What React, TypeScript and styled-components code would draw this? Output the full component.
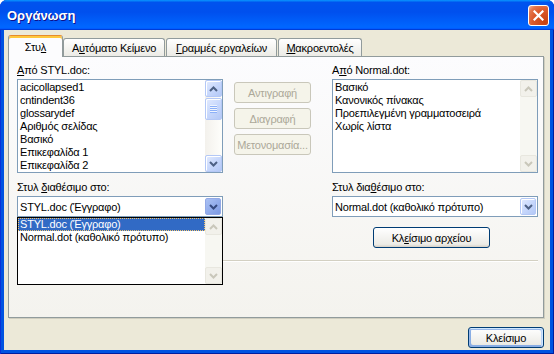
import React from 'react';
import styled, { createGlobalStyle, css } from 'styled-components';

const GlobalStyle = createGlobalStyle`
  html, body {
    margin: 0;
    padding: 0;
    background: #ffffff;
  }
  body {
    font-family: 'Liberation Sans', Arial, sans-serif;
    font-size: 11px;
    letter-spacing: -0.2px;
    color: #000;
  }
`;

const Window = styled.div`
  width: 554px;
  height: 354px;
  box-sizing: border-box;
  display: flex;
  flex-direction: column;
  background: #0053e1;
  border-radius: 7px 7px 0 0;
  overflow: hidden;
  box-shadow: inset 1px 0 #0831d9, inset -1px 0 #001ea0, inset 0 -1px #001ea0;
`;

const TitleBar = styled.div`
  height: 30px;
  flex-shrink: 0;
  display: flex;
  align-items: center;
  padding: 1px 5px 0 7px;
  box-sizing: border-box;
  background: linear-gradient(
    180deg,
    #0997ff 0%,
    #0053ee 8%,
    #0050ee 40%,
    #0066ff 88%,
    #0066ff 93%,
    #005bff 95%,
    #003dd7 96%,
    #003dd7 100%
  );
`;

const Title = styled.div`
  flex: 1;
  color: #fff;
  font-weight: bold;
  font-size: 13px;
  letter-spacing: 0;
  text-shadow: 1px 1px #0f1089;
`;

const CloseBox = styled.div`
  width: 21px;
  height: 21px;
  box-sizing: border-box;
  border: 1px solid #fff;
  border-radius: 3px;
  margin-top: -1px;
  display: flex;
  align-items: center;
  justify-content: center;
  background: radial-gradient(circle at 85% 85%, #c74111 0%, #dc5a2c 55%, #e4764c 80%, #f3b79c 100%);
`;

const Client = styled.div`
  flex: 1;
  margin: 0 4px 4px;
  background: #ece9d8;
  display: flex;
  flex-direction: column;
  padding: 5px 6px 0 4px;
  box-sizing: border-box;
`;

const TabRow = styled.div`
  height: 21px;
  display: flex;
  align-items: flex-end;
  gap: 1px;
  position: relative;
  z-index: 2;
`;

const Tab = styled.div<{ $active?: boolean; $w: number }>`
  width: ${p => p.$w}px;
  height: 18px;
  box-sizing: border-box;
  padding-top: 3px;
  display: flex;
  justify-content: center;
  line-height: 13px;
  white-space: nowrap;
  border: 1px solid #919b9c;
  border-bottom: none;
  border-radius: 3px 3px 0 0;
  background: linear-gradient(180deg, #ffffff 0%, #f3f3ef 60%, #ecebe6 100%);
  ${p =>
    p.$active &&
    css`
      height: 22px;
      margin-bottom: -1px;
      margin-right: -1px;
      padding-top: 5px;
      background: #fcfcfe;
      border-top-color: #e68b2c;
      box-shadow: inset 0 2px #ffc83c;
    `}
`;

const Panel = styled.div`
  height: 262px;
  box-sizing: border-box;
  border: 1px solid #919b9c;
  background: linear-gradient(180deg, #fcfcfe 0%, #f4f3ee 100%);
  box-shadow: 1px 1px 0 #d0cebf;
  padding: 7px 5px 0 8px;
  position: relative;
  z-index: 1;
`;

const Columns = styled.div`
  display: grid;
  grid-template-columns: 206px 109px 206px;
  align-items: start;
`;

const Column = styled.div`
  display: flex;
  flex-direction: column;
`;

const ButtonColumn = styled.div`
  display: flex;
  flex-direction: column;
  gap: 5px;
  padding: 18px 0 0 11px;
`;

const Label = styled.div<{ $lower?: boolean }>`
  height: 13px;
  line-height: 13px;
  margin-bottom: 2px;
  white-space: nowrap;
  ${p => p.$lower && 'margin-top: 8px;'}
`;

const Key = styled.span`
  text-decoration: underline;
  text-underline-offset: 1px;
`;

const ListBox = styled.div`
  height: 94px;
  box-sizing: border-box;
  border: 1px solid #7f9db9;
  background: #fff;
  display: flex;
`;

const Items = styled.div`
  flex: 1;
  min-width: 0;
  padding-top: 1px;
`;

const Item = styled.div<{ $selected?: boolean }>`
  height: 13px;
  line-height: 13px;
  padding-left: 2px;
  white-space: nowrap;
  overflow: hidden;
  ${p =>
    p.$selected &&
    css`
      background: #316ac5;
      color: #fff;
      outline: 1px dotted #f2c46e;
      outline-offset: -1px;
    `}
`;

const ScrollTrack = styled.div<{ $disabled?: boolean }>`
  width: 17px;
  display: flex;
  flex-direction: column;
  background: ${p => (p.$disabled ? '#f7f7f2' : 'linear-gradient(90deg, #f3f1ec, #fefefb)')};
`;

const blueFace = css`
  border: 1px solid #b4c8f6;
  border-radius: 2px;
  background: linear-gradient(135deg, #e3ebfe 0%, #c8d8fc 50%, #b3c8f6 100%);
  box-shadow: inset 1px 1px #fff;
`;

const ScrollButton = styled.div<{ $disabled?: boolean }>`
  width: 17px;
  height: 17px;
  box-sizing: border-box;
  display: flex;
  align-items: center;
  justify-content: center;
  ${p =>
    p.$disabled
      ? css`
          border: 1px solid #e8e7df;
          border-radius: 2px;
          background: #f2f1eb;
          color: #c9c7ba;
        `
      : css`
          ${blueFace};
          color: #4d6185;
        `}
`;

const Thumb = styled.div`
  ${blueFace};
  height: 22px;
  margin-top: 1px;
  box-sizing: border-box;
  display: flex;
  align-items: center;
  justify-content: center;
`;

const Grip = styled.div`
  width: 7px;
  height: 8px;
  background: repeating-linear-gradient(180deg, #eef4fe 0px, #eef4fe 1px, #8cb0f8 1px, #8cb0f8 2px);
`;

const Filler = styled.div`
  flex: 1;
`;

const Combo = styled.div`
  position: relative;
  height: 21px;
  box-sizing: border-box;
  border: 1px solid #7f9db9;
  background: #fff;
  display: flex;
  align-items: center;
`;

const ComboText = styled.div`
  flex: 1;
  padding-left: 2px;
  white-space: nowrap;
  overflow: hidden;
`;

const ComboArrow = styled.div<{ $open?: boolean }>`
  width: 16px;
  height: 17px;
  margin-right: 1px;
  box-sizing: border-box;
  display: flex;
  align-items: center;
  justify-content: center;
  border-radius: 2px;
  color: #4d6185;
  ${p =>
    p.$open
      ? css`
          border: 1px solid #93a9e6;
          background: linear-gradient(135deg, #aac1f3 0%, #8ea9ea 60%, #7d9ae3 100%);
          color: #354a80;
        `
      : css`
          border: 1px solid #b4c8f6;
          background: linear-gradient(135deg, #e3ebfe 0%, #c8d8fc 50%, #b3c8f6 100%);
          box-shadow: inset 1px 1px #fff;
        `}
`;

const DropList = styled.div`
  position: absolute;
  top: calc(100% + 1px);
  left: -1px;
  width: 206px;
  height: 68px;
  box-sizing: border-box;
  border: 1px solid #000;
  background: #fff;
  display: flex;
  z-index: 5;
`;

const DropItems = styled.div`
  flex: 1;
  min-width: 0;
`;

const Button = styled.button<{ $w: number; $default?: boolean }>`
  width: ${p => p.$w}px;
  height: 21px;
  box-sizing: border-box;
  padding: 0;
  font-family: inherit;
  font-size: 11px;
  letter-spacing: -0.2px;
  color: #000;
  border: 1px solid #003c74;
  border-radius: 3px;
  background: linear-gradient(180deg, #ffffff 0%, #ecebe6 86%, #d6d0c5 100%);
  white-space: nowrap;
  ${p =>
    p.$default &&
    css`
      box-shadow: inset -1px 1px #cee7ff, inset 1px 2px #98b8ea, inset -2px 2px #bcd4f6,
        inset 1px -1px #89ade4, inset 2px -2px #89ade4;
    `}
  &:disabled {
    border-color: #c9c7ba;
    background: #f5f4ea;
    color: #aca899;
  }
`;

const FileButton = styled(Button)`
  margin: 10px 0 0 41px;
`;

const Separator = styled.div`
  height: 1px;
  margin-top: 12px;
  background: #d3d0c2;
  box-shadow: 0 1px #fff;
`;

const Footer = styled.div`
  display: flex;
  justify-content: flex-end;
  padding-top: 9px;
`;

const Arrow = ({ dir }: { dir: 'up' | 'down' }) => (
  <svg width="9" height="6" viewBox="0 0 9 6">
    <polyline
      points={dir === 'up' ? '1,5 4.5,1.5 8,5' : '1,1 4.5,4.5 8,1'}
      fill="none"
      stroke="currentColor"
      strokeWidth="2"
    />
  </svg>
);

const ScrollBar = ({ disabled }: { disabled?: boolean }) => (
  <ScrollTrack $disabled={disabled}>
    <ScrollButton $disabled={disabled}>
      <Arrow dir="up" />
    </ScrollButton>
    {!disabled && (
      <Thumb>
        <Grip />
      </Thumb>
    )}
    <Filler />
    <ScrollButton $disabled={disabled}>
      <Arrow dir="down" />
    </ScrollButton>
  </ScrollTrack>
);

const leftStyles = [
  'acicollapsed1',
  'cntindent36',
  'glossarydef',
  'Αριθμός σελίδας',
  'Βασικό',
  'Επικεφαλίδα 1',
  'Επικεφαλίδα 2',
];

const rightStyles = ['Βασικό', 'Κανονικός πίνακας', 'Προεπιλεγμένη γραμματοσειρά', 'Χωρίς λίστα'];

const tabs = [
  { w: 55, label: <>Στυ<Key>λ</Key></> },
  { w: 102, label: <>Α<Key>υ</Key>τόματο Κείμενο</> },
  { w: 111, label: <><Key>Γ</Key>ραμμές εργαλείων</> },
  { w: 84, label: <><Key>Μ</Key>ακροεντολές</> },
];

const App: React.FC = () => (
  <>
    <GlobalStyle />
    <Window>
      <TitleBar>
        <Title>Οργάνωση</Title>
        <CloseBox>
          <svg width="11" height="11" viewBox="0 0 11 11">
            <path d="M1.5 1.5 L9.5 9.5 M9.5 1.5 L1.5 9.5" stroke="#fff" strokeWidth="2.2" strokeLinecap="square" />
          </svg>
        </CloseBox>
      </TitleBar>

      <Client>
        <TabRow>
          {tabs.map((t, i) => (
            <Tab key={i} $w={t.w} $active={i === 0}>
              {t.label}
            </Tab>
          ))}
        </TabRow>

        <Panel>
          <Columns>
            <Column>
              <Label>
                <Key>Α</Key>πό STYL.doc:
              </Label>
              <ListBox>
                <Items>
                  {leftStyles.map(s => (
                    <Item key={s}>{s}</Item>
                  ))}
                </Items>
                <ScrollBar />
              </ListBox>
              <Label $lower>
                Στυλ <Key>δ</Key>ιαθέσιμο στο:
              </Label>
              <Combo>
                <ComboText>STYL.doc (Έγγραφο)</ComboText>
                <ComboArrow $open>
                  <Arrow dir="down" />
                </ComboArrow>
                <DropList>
                  <DropItems>
                    <Item $selected>STYL.doc (Έγγραφο)</Item>
                    <Item>Normal.dot (καθολικό πρότυπο)</Item>
                  </DropItems>
                  <ScrollBar disabled />
                </DropList>
              </Combo>
            </Column>

            <ButtonColumn>
              <Button $w={77} disabled>Αντιγραφή</Button>
              <Button $w={77} disabled>Διαγραφή</Button>
              <Button $w={77} disabled>Μετονομασία...</Button>
            </ButtonColumn>

            <Column>
              <Label>
                Α<Key>π</Key>ό Normal.dot:
              </Label>
              <ListBox>
                <Items>
                  {rightStyles.map(s => (
                    <Item key={s}>{s}</Item>
                  ))}
                </Items>
                <ScrollBar disabled />
              </ListBox>
              <Label $lower>
                Στυλ δια<Key>θ</Key>έσιμο στο:
              </Label>
              <Combo>
                <ComboText>Normal.dot (καθολικό πρότυπο)</ComboText>
                <ComboArrow>
                  <Arrow dir="down" />
                </ComboArrow>
              </Combo>
              <FileButton $w={117}>
                Κλ<Key>ε</Key>ίσιμο αρχείου
              </FileButton>
            </Column>
          </Columns>
          <Separator />
        </Panel>

        <Footer>
          <Button $w={76} $default>
            Κλείσιμο
          </Button>
        </Footer>
      </Client>
    </Window>
  </>
);

export default App;
